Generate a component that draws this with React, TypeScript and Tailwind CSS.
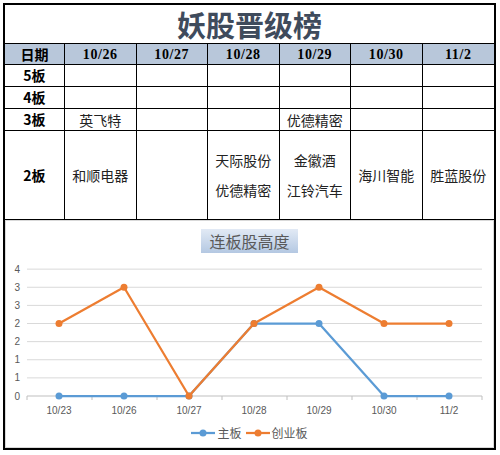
import React from "react";

const CJK = '"Noto Sans CJK SC", "Noto Sans", sans-serif';
const SERIF = '"Liberation Serif", "Noto Sans CJK SC", serif';

const dates = ["10/26", "10/27", "10/28", "10/29", "10/30", "11/2"];

type Row = { label: string; cells: string[][]; h: string };
const rows: Row[] = [
  { label: "5板", cells: [[], [], [], [], [], []], h: "h-[22px]" },
  { label: "4板", cells: [[], [], [], [], [], []], h: "h-[22px]" },
  { label: "3板", cells: [["英飞特"], [], [], ["优德精密"], [], []], h: "h-[22px]" },
  {
    label: "2板",
    cells: [["和顺电器"], [], ["天际股份", "优德精密"], ["金徽酒", "江铃汽车"], ["海川智能"], ["胜蓝股份"]],
    h: "h-[89px]",
  },
];

const cats = ["10/23", "10/26", "10/27", "10/28", "10/29", "10/30", "11/2"];
const blue = [0, 0, 0, 2, 2, 0, 0];
const orange = [2, 3, 0, 2, 3, 2, 2];
const cx = (i: number) => 59 + 65 * i;
const cy = (v: number) => 396 - 36.25 * v;

function Chart() {
  const grid = [0.5, 1, 1.5, 2, 2.5, 3, 3.5];
  const labels = [
    { v: 0, t: "0" },
    { v: 0.5, t: "1" },
    { v: 1, t: "1" },
    { v: 1.5, t: "2" },
    { v: 2, t: "2" },
    { v: 2.5, t: "3" },
    { v: 3, t: "3" },
    { v: 3.5, t: "4" },
  ];
  const pts = (d: number[]) => d.map((v, i) => `${cx(i)},${cy(v)}`).join(" ");
  return (
    <svg width={487} height={164} viewBox="6 256 487 164" className="block">
      {grid.map((g) => (
        <line key={g} x1={27} x2={482} y1={cy(g)} y2={cy(g)} stroke="#d9d9d9" strokeWidth={1} />
      ))}
      <line x1={27} x2={482} y1={396} y2={396} stroke="#bfbfbf" strokeWidth={1} />
      {Array.from({ length: 8 }).map((_, k) => (
        <line key={k} x1={27 + 65 * k} x2={27 + 65 * k} y1={396} y2={400} stroke="#bfbfbf" strokeWidth={1} />
      ))}
      {labels.map((l, i) => (
        <text
          key={i}
          x={20}
          y={cy(l.v) + 3.5}
          textAnchor="end"
          fontSize={10}
          fill="#595959"
          fontFamily='"Liberation Sans", sans-serif'
        >
          {l.t}
        </text>
      ))}
      {cats.map((c, i) => (
        <text
          key={c}
          x={cx(i)}
          y={414}
          textAnchor="middle"
          fontSize={10}
          fill="#595959"
          fontFamily='"Liberation Sans", sans-serif'
        >
          {c}
        </text>
      ))}
      <polyline points={pts(blue)} fill="none" stroke="#5b9bd5" strokeWidth={2.25} strokeLinejoin="round" />
      {blue.map((v, i) => (
        <circle key={i} cx={cx(i)} cy={cy(v)} r={3.5} fill="#5b9bd5" />
      ))}
      <polyline points={pts(orange)} fill="none" stroke="#ed7d31" strokeWidth={2.25} strokeLinejoin="round" />
      {orange.map((v, i) => (
        <circle key={i} cx={cx(i)} cy={cy(v)} r={3.5} fill="#ed7d31" />
      ))}
    </svg>
  );
}

function LegendItem({ color, label }: { color: string; label: string }) {
  return (
    <div className="flex items-center gap-[2px]">
      <svg width={24} height={8} className="block">
        <line x1={0} x2={24} y1={4} y2={4} stroke={color} strokeWidth={2.25} />
        <circle cx={12} cy={4} r={3.5} fill={color} />
      </svg>
      <span className="text-[12px] leading-[14px] text-[#595959]">{label}</span>
    </div>
  );
}

export default function App() {
  return (
    <div className="w-[500px] h-[455px] bg-white pt-[3px] pl-[3px]" style={{ fontFamily: CJK }}>
      <div className="w-[493px] h-[447px] border-2 border-black flex flex-col">
        <div className="h-[39px] border-b border-black flex items-center justify-center">
          <span className="text-[29px] leading-none font-bold text-[#3f4b5c]">妖股晋级榜</span>
        </div>
        <div className="grid grid-cols-[60px_repeat(6,1fr)]">
          <div className="h-[21px] bg-[#b8c7da] border-b border-r border-black flex items-center justify-center text-[14px] font-bold text-black">
            日期
          </div>
          {dates.map((d, i) => (
            <div
              key={d}
              className={`h-[21px] bg-[#b8c7da] border-b border-black flex items-center justify-center text-[14px] font-bold tracking-[0.6px] text-black ${
                i < 5 ? "border-r" : ""
              }`}
              style={{ fontFamily: SERIF }}
            >
              {d}
            </div>
          ))}
          {rows.map((r) => (
            <React.Fragment key={r.label}>
              <div
                className={`${r.h} border-b border-r border-black flex items-center justify-center text-[14px] font-bold text-black`}
              >
                {r.label}
              </div>
              {r.cells.map((c, i) => (
                <div
                  key={i}
                  className={`${r.h} border-b border-black flex flex-col items-center justify-center text-[14px] text-[#222] ${
                    i < 5 ? "border-r" : ""
                  }`}
                >
                  {c.map((t) => (
                    <span key={t} className={c.length > 1 ? "leading-[30px]" : "leading-[20px]"}>
                      {t}
                    </span>
                  ))}
                </div>
              ))}
            </React.Fragment>
          ))}
        </div>
        <div className="flex-1 border border-[#d9d9d9] flex flex-col items-center">
          <div className="mt-[8px] h-[24px] w-[97px] bg-gradient-to-b from-[#e2eaf5] to-[#b4c8e2] flex items-center justify-center">
            <span className="text-[16px] leading-none text-[#595959]">连板股高度</span>
          </div>
          <div className="mt-[3px] self-start">
            <Chart />
          </div>
          <div className="mt-[6px] flex items-center gap-[4px]">
            <LegendItem color="#5b9bd5" label="主板" />
            <LegendItem color="#ed7d31" label="创业板" />
          </div>
        </div>
      </div>
    </div>
  );
}
